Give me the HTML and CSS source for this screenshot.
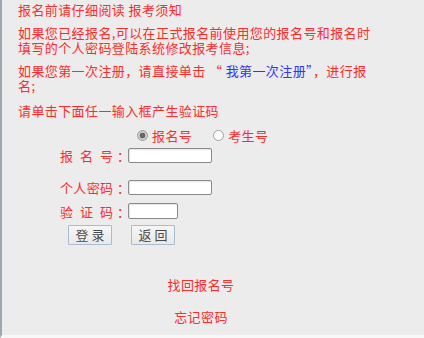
FILE: index.html
```html
<!DOCTYPE html>
<html lang="zh-CN">
<head>
<meta charset="utf-8">
<title>报名登录</title>
<link rel="stylesheet" href="styles.css">
</head>
<body>
<div class="page">
  <div class="notice">
    <p>报名前请仔细阅读 报考须知</p>
    <p>如果您已经报名,可以在正式报名前使用您的报名号和报名时填写的个人密码登陆系统修改报考信息;</p>
    <p>如果您第一次注册，请直接单击 “ <a class="reg" href="#">我第一次注册”</a>，进行报名;</p>
    <p class="tip">请单击下面任一输入框产生验证码</p>
  </div>
  <form class="login">
    <div class="radios">
      <label class="opt"><input type="radio" name="kind" class="radio" checked>报名号</label>
      <label class="opt"><input type="radio" name="kind" class="radio">考生号</label>
    </div>
    <div class="field">
      <span class="lbl">报名号</span><span class="colon">：</span><input type="text" class="txt">
    </div>
    <div class="field gap">
      <span class="lbl">个人密码</span><span class="colon">：</span><input type="password" class="txt">
    </div>
    <div class="field">
      <span class="lbl">验证码</span><span class="colon">：</span><input type="text" class="txt short">
    </div>
    <div class="buttons">
      <button type="button" class="btn">登 录</button>
      <button type="button" class="btn">返 回</button>
    </div>
  </form>
  <div class="links">
    <a href="#" class="link">找回报名号</a>
    <a href="#" class="link second">忘记密码</a>
  </div>
</div>
</body>
</html>
```
FILE: styles.css
```css
html, body {
  margin: 0;
  padding: 0;
}
body {
  background: #ececec;
  font-family: "Noto Sans CJK SC", sans-serif;
  font-size: 13px;
  letter-spacing: 0.4px;
  color: #ff2b2b;
}
.page {
  height: 338px;
  box-sizing: border-box;
  padding-top: 2px;
  border-left: 2px solid #9ba7b1;
  border-bottom: 3px solid #f8f8f8;
  overflow: hidden;
}
.notice {
  padding-left: 16px;
  width: 358px;
}
.notice p {
  margin: 0 0 8px;
  line-height: 15px;
}
.notice .tip {
  margin-top: 10px;
  margin-bottom: 0;
}
.reg {
  color: #3333ff;
  text-decoration: none;
}
.login {
  margin: 10px 0 0;
}
.radios {
  display: flex;
  gap: 21px;
  padding-left: 135px;
  height: 15px;
  align-items: center;
}
.opt {
  display: flex;
  align-items: center;
  line-height: 15px;
}
.radio {
  appearance: none;
  -webkit-appearance: none;
  margin: 0 4px 0 0;
  width: 11px;
  height: 11px;
  box-sizing: border-box;
  border: 1px solid #a0a0a0;
  border-radius: 50%;
  background: #fff;
}
.radio:checked {
  background: radial-gradient(circle, #666 0 2.6px, #cfcfcf 3.2px);
  border-color: #9a9a9a;
}
.field {
  display: flex;
  align-items: center;
  height: 24px;
  padding-left: 58px;
}
.field.gap {
  margin-top: 8px;
}
.lbl {
  display: inline-block;
  width: 53px;
  text-align: justify;
  text-align-last: justify;
  letter-spacing: 0;
}
.colon {
  display: inline-block;
  width: 15px;
  box-sizing: border-box;
  padding-left: 4px;
  letter-spacing: 0;
}
.txt {
  margin: 0;
  padding: 0 2px;
  width: 84px;
  height: 15px;
  box-sizing: border-box;
  border: 1px solid #8a8a8a;
  border-radius: 2px;
  background: #fff;
  box-shadow: inset 1px 1px 1px rgba(0, 0, 0, 0.1);
  font-size: 12px;
}
.txt.short {
  width: 50px;
  height: 16px;
}
.buttons {
  display: flex;
  gap: 19px;
  padding-left: 66px;
  margin-top: 2px;
}
.btn {
  margin: 0;
  padding: 0;
  width: 44px;
  height: 20px;
  box-sizing: border-box;
  border: 1px solid #a9bcd0;
  border-radius: 1px;
  background: linear-gradient(#f6f6f6, #e9e9e9);
  font-family: "Noto Sans CJK SC", sans-serif;
  font-size: 13px;
  line-height: 18px;
  letter-spacing: 0;
  color: #4a4a4a;
}
.links {
  width: 398px;
  display: flex;
  flex-direction: column;
  align-items: center;
  margin-top: 32px;
  line-height: 15px;
}
.link {
  color: #ff2b2b;
  text-decoration: none;
}
.link.second {
  margin-top: 17px;
}
```
